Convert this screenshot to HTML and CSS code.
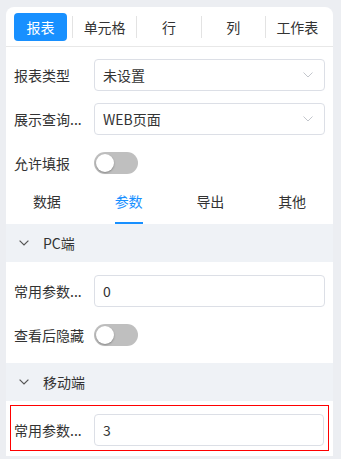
FILE: index.html
```html
<!DOCTYPE html>
<html>
  <head>
    <meta charset="UTF-8" />
    <title>报表属性</title>
    <link rel="stylesheet" href="styles.css">
  </head>

  <body>
    <div class="panel">
      <div class="tabbar">
        <div class="tab active">报表</div>
        <div class="tab">单元格</div>
        <div class="tab">行</div>
        <div class="tab">列</div>
        <div class="tab">工作表</div>
      </div>

      <div class="form">
        <div class="row">
          <label class="label">报表类型</label>
          <div class="select">
            <span>未设置</span>
            <svg class="arrow" width="10" height="6" viewBox="0 0 10 6"><path d="M0.5 0.5 L5 5 L9.5 0.5" fill="none" stroke="#c3c6cc" stroke-width="1"/></svg>
          </div>
        </div>
        <div class="row">
          <label class="label" title="展示查询条件">展示查询...</label>
          <div class="select">
            <span>WEB页面</span>
            <svg class="arrow" width="10" height="6" viewBox="0 0 10 6"><path d="M0.5 0.5 L5 5 L9.5 0.5" fill="none" stroke="#c3c6cc" stroke-width="1"/></svg>
          </div>
        </div>
        <div class="row last">
          <label class="label">允许填报</label>
          <div class="switch"><span class="knob"></span></div>
        </div>
      </div>

      <div class="subtabs">
        <div class="subtab">数据</div>
        <div class="subtab active">参数</div>
        <div class="subtab">导出</div>
        <div class="subtab">其他</div>
      </div>

      <div class="group-head">
        <svg class="chevron" width="10" height="6" viewBox="0 0 10 6"><path d="M0.6 0.6 L5 5 L9.4 0.6" fill="none" stroke="#555" stroke-width="1.2"/></svg>
        <span>PC端</span>
      </div>
      <div class="group-body">
        <div class="row">
          <label class="label" title="常用参数面板">常用参数...</label>
          <input class="input" type="text" value="0" />
        </div>
        <div class="row">
          <label class="label">查看后隐藏</label>
          <div class="switch"><span class="knob"></span></div>
        </div>
      </div>

      <div class="group-head">
        <svg class="chevron" width="10" height="6" viewBox="0 0 10 6"><path d="M0.6 0.6 L5 5 L9.4 0.6" fill="none" stroke="#555" stroke-width="1.2"/></svg>
        <span>移动端</span>
      </div>
      <div class="group-body mobile">
        <div class="row highlight">
          <label class="label" title="常用参数面板">常用参数...</label>
          <input class="input" type="text" value="3" />
        </div>
      </div>
    </div>
  </body>
</html>
```

FILE: styles.css
```css
html, body {
  margin: 0;
  height: 100%;
}

body {
  background-color: #eceef2;
  color: #333333;
  font-family: "Noto Sans CJK SC", "Noto Sans", sans-serif;
  font-size: 14px;
  padding: 7px 8px 0 6px;
  box-sizing: border-box;
}

.panel {
  background: #ffffff;
  border-radius: 8px 8px 0 0;
  height: 449px;
}

/* top tabs */
.tabbar {
  display: flex;
  align-items: center;
  padding: 6px 4px 5px 8px;
  border-bottom: 1px solid #e8e8e8;
}

.tab {
  flex: 1;
  height: 22px;
  line-height: 22px;
  text-align: center;
  border-left: 1px solid #e3e3e3;
  color: #333333;
}

.tab.active {
  flex: none;
  width: 53px;
  height: 28px;
  line-height: 28px;
  margin-right: 5px;
  border-left: none;
  border-radius: 4px;
  background-color: #1890ff;
  color: #ffffff;
}

/* form rows */
.form {
  padding: 12px 8px 0 8px;
}

.row {
  display: flex;
  align-items: center;
  height: 32px;
  margin-bottom: 12px;
}

.row.last {
  margin-bottom: 0;
}

.label {
  width: 72px;
  margin-right: 8px;
  flex: none;
  white-space: nowrap;
}

.select,
.input {
  flex: 1;
  height: 32px;
  box-sizing: border-box;
  border: 1px solid #dcdfe6;
  border-radius: 4px;
  padding: 0 11px 0 8px;
  font-family: inherit;
  font-size: 14px;
  color: #333333;
}

.select {
  display: flex;
  align-items: center;
  justify-content: space-between;
}

.input {
  width: 0;
  outline: none;
}

.switch {
  display: flex;
  align-items: center;
  width: 44px;
  height: 22px;
  padding: 0 2px;
  box-sizing: border-box;
  border-radius: 11px;
  background-color: #bfbfbf;
}

.knob {
  width: 18px;
  height: 18px;
  border-radius: 50%;
  background: #ffffff;
  box-shadow: 0 1px 2px rgba(0, 0, 0, 0.3);
}

/* sub tabs */
.subtabs {
  display: flex;
  height: 45px;
}

.subtab {
  flex: 1;
  display: flex;
  flex-direction: column;
  align-items: center;
  justify-content: space-between;
  padding-top: 12px;
  box-sizing: border-box;
}

.subtab::after {
  content: "";
  width: 28px;
  height: 2px;
}

.subtab.active {
  color: #1890ff;
}

.subtab.active::after {
  background-color: #1890ff;
}

/* collapse groups */
.group-head {
  display: flex;
  align-items: center;
  height: 38px;
  padding-left: 13px;
  background-color: #eff2f6;
}

.chevron {
  margin-right: 14px;
}

.group-body {
  padding: 13px 8px 0 8px;
}

.group-body.mobile {
  padding-top: 4px;
}

.row.highlight {
  height: auto;
  margin: 0 -4px;
  padding: 8px 4px 4px 3px;
  border: 1px solid #ff0000;
}
```
